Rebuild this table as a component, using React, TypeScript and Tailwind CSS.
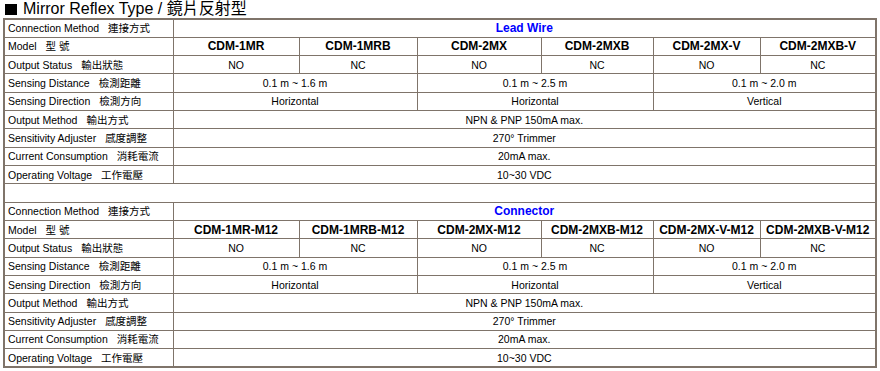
import React from "react";

type Cell = { text: string; span: number };

const labelFont = {
  fontFamily: '"Liberation Sans", Arial, "Noto Sans CJK TC", sans-serif',
};

const sections = [
  {
    method: "Lead Wire",
    models: ["CDM-1MR", "CDM-1MRB", "CDM-2MX", "CDM-2MXB", "CDM-2MX-V", "CDM-2MXB-V"],
  },
  {
    method: "Connector",
    models: [
      "CDM-1MR-M12",
      "CDM-1MRB-M12",
      "CDM-2MX-M12",
      "CDM-2MXB-M12",
      "CDM-2MX-V-M12",
      "CDM-2MXB-V-M12",
    ],
  },
];

const specRows: { en: string; zh: string; cells: Cell[] }[] = [
  {
    en: "Output Status",
    zh: "輸出狀態",
    cells: ["NO", "NC", "NO", "NC", "NO", "NC"].map((t) => ({ text: t, span: 1 })),
  },
  {
    en: "Sensing Distance",
    zh: "檢測距離",
    cells: [
      { text: "0.1 m ~ 1.6 m", span: 2 },
      { text: "0.1 m ~ 2.5 m", span: 2 },
      { text: "0.1 m ~ 2.0 m", span: 2 },
    ],
  },
  {
    en: "Sensing Direction",
    zh: "檢測方向",
    cells: [
      { text: "Horizontal", span: 2 },
      { text: "Horizontal", span: 2 },
      { text: "Vertical", span: 2 },
    ],
  },
  { en: "Output Method", zh: "輸出方式", cells: [{ text: "NPN & PNP 150mA max.", span: 6 }] },
  { en: "Sensitivity Adjuster", zh: "感度調整", cells: [{ text: "270° Trimmer", span: 6 }] },
  { en: "Current Consumption", zh: "消耗電流", cells: [{ text: "20mA max.", span: 6 }] },
  { en: "Operating Voltage", zh: "工作電壓", cells: [{ text: "10~30 VDC", span: 6 }] },
];

function Label({ en, zh }: { en: string; zh: string }) {
  return (
    <td className="border border-[#7f746a] pl-[3px] text-left whitespace-nowrap">
      {en}
      <span className="ml-[9px]">{zh}</span>
    </td>
  );
}

export default function App() {
  return (
    <div className="bg-white w-[880px] h-[371px] px-[3px] text-black" style={labelFont}>
      <div className="flex items-center h-[18px] text-[16px] leading-none">
        <span className="inline-block w-[12px] h-[11px] bg-black ml-[2px] mr-[6px]" />
        <span>Mirror Reflex Type / 鏡片反射型</span>
      </div>

      <table className="table-fixed border-collapse border-2 border-[#7f746a] w-[872px] text-[10.5px] leading-none text-center">
        <colgroup>
          <col className="w-[169px]" />
          <col className="w-[126px]" />
          <col className="w-[118px]" />
          <col className="w-[124px]" />
          <col className="w-[112px]" />
          <col className="w-[107px]" />
          <col className="w-[116px]" />
        </colgroup>
        <tbody>
          {sections.map((s, si) => (
            <React.Fragment key={s.method}>
              {si > 0 && (
                <tr className="h-[18.33px]">
                  <td colSpan={7} className="border border-[#7f746a]" />
                </tr>
              )}
              <tr className="h-[18.33px]">
                <Label en="Connection Method" zh="連接方式" />
                <td colSpan={6} className="border border-[#7f746a] text-[12px] font-bold text-[#0000ff]">
                  {s.method}
                </td>
              </tr>
              <tr className="h-[18.33px]">
                <Label en="Model" zh="型 號" />
                {s.models.map((m) => (
                  <td key={m} className="border border-[#7f746a] text-[12px] font-bold whitespace-nowrap">
                    {m}
                  </td>
                ))}
              </tr>
              {specRows.map((r) => (
                <tr key={r.en} className="h-[18.33px]">
                  <Label en={r.en} zh={r.zh} />
                  {r.cells.map((c, i) => (
                    <td key={i} colSpan={c.span} className="border border-[#7f746a]">
                      {c.text}
                    </td>
                  ))}
                </tr>
              ))}
            </React.Fragment>
          ))}
        </tbody>
      </table>
    </div>
  );
}
